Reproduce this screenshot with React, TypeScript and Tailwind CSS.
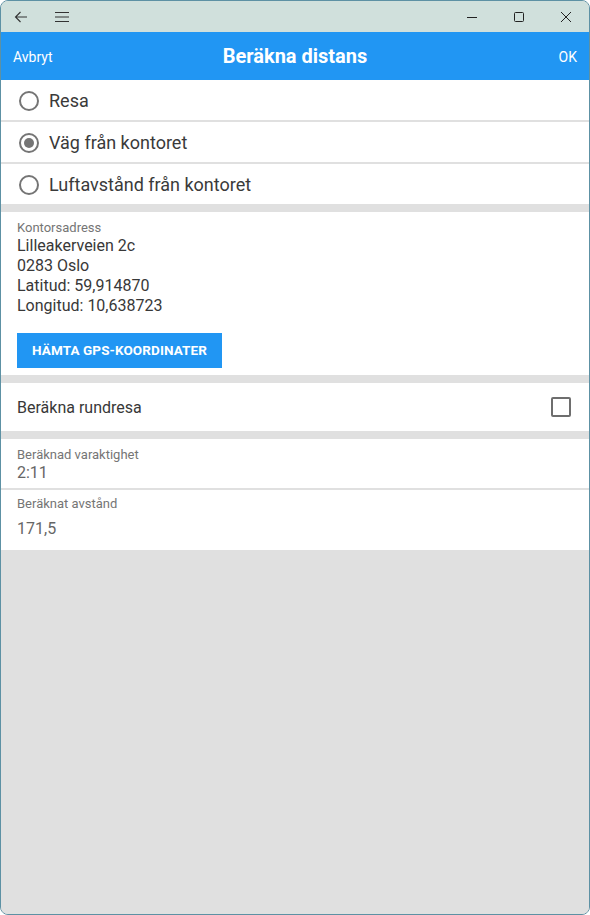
import React from 'react';

const Radio = ({ checked }: { checked?: boolean }) => (
    <svg width="22" height="22" viewBox="0 0 22 22" className="shrink-0">
        <circle cx="11" cy="11" r="9" fill="none" stroke="#757575" strokeWidth="2" />
        {checked && <circle cx="11" cy="11" r="5" fill="#757575" />}
    </svg>
);

const options = [
    { label: 'Resa', checked: false },
    { label: 'Väg från kontoret', checked: true },
    { label: 'Luftavstånd från kontoret', checked: false },
];

export default function App() {
    return (
        <div className="w-[590px] h-[915px] bg-white font-['Roboto',sans-serif]">
            <div className="w-full h-full flex flex-col border border-[#5d91a4] rounded-[8px] overflow-hidden bg-[#e0e0e0]">
                {/* title bar */}
                <div className="h-[31px] bg-[#d0e0dc] flex items-center shrink-0 text-[#222]">
                    <svg width="16" height="16" viewBox="0 0 16 16" className="ml-[12px]">
                        <path d="M14 8H2.5M7.5 3L2.5 8l5 5" fill="none" stroke="#333" strokeWidth="1.1" />
                    </svg>
                    <svg width="16" height="12" viewBox="0 0 16 12" className="ml-[25px]">
                        <path d="M1 1.5h14M1 6h14M1 10.5h14" fill="none" stroke="#333" strokeWidth="1.1" />
                    </svg>
                    <div className="flex-1" />
                    <svg width="12" height="12" viewBox="0 0 12 12" className="mr-[35px]">
                        <path d="M1 6.5h10" stroke="#222" strokeWidth="1" />
                    </svg>
                    <svg width="12" height="12" viewBox="0 0 12 12" className="mr-[35px]">
                        <rect x="1.5" y="1.5" width="9" height="9" rx="1" fill="none" stroke="#222" strokeWidth="1" />
                    </svg>
                    <svg width="12" height="12" viewBox="0 0 12 12" className="mr-[17px]">
                        <path d="M1 1l10 10M11 1L1 11" stroke="#222" strokeWidth="1" />
                    </svg>
                </div>

                {/* header */}
                <div className="h-[48px] bg-[#2196f3] flex items-center justify-between px-[12px] pt-[2px] text-white shrink-0 relative">
                    <span className="text-[14px]">Avbryt</span>
                    <span className="absolute left-0 right-0 top-[12px] text-center text-[20px] leading-[24px] font-bold pointer-events-none">Beräkna distans</span>
                    <span className="text-[14px]">OK</span>
                </div>

                {/* radio list */}
                <div className="bg-white">
                    {options.map((o, i) => (
                        <div
                            key={o.label}
                            className={i < 2
                                ? 'h-[42px] flex items-center gap-[9px] pl-[17px] pt-[1px] text-[18px] text-[#3a3a3a] border-b-2 border-[#e0e0e0]'
                                : 'h-[40px] flex items-center gap-[9px] pl-[17px] pt-[1px] text-[18px] text-[#3a3a3a]'}
                        >
                            <Radio checked={o.checked} />
                            <span>{o.label}</span>
                        </div>
                    ))}
                </div>

                {/* address */}
                <div className="bg-white mt-[8px] px-[16px] pt-[8px] pb-[7px]">
                    <p className="text-[13px] leading-[16px] text-[#757575]">Kontorsadress</p>
                    <div className="text-[16px] leading-[20px] text-[#383838]">
                        <p>Lilleakerveien 2c</p>
                        <p>0283 Oslo</p>
                        <p>Latitud: 59,914870</p>
                        <p>Longitud: 10,638723</p>
                    </div>
                    <button className="mt-[17px] h-[35px] w-[205px] bg-[#2196f3] text-white text-[13.5px] font-bold uppercase tracking-[0.1px]">
                        Hämta GPS-koordinater
                    </button>
                </div>

                {/* round trip */}
                <div className="bg-white mt-[8px] h-[48px] flex items-center justify-between pl-[16px] pr-[18px] pt-[2px]">
                    <span className="text-[16px] text-[#383838]">Beräkna rundresa</span>
                    <div className="w-[20px] h-[20px] border-2 border-[#6e6e6e] rounded-[2px] -mt-[2px]" />
                </div>

                {/* results */}
                <div className="bg-white mt-[8px] px-[16px] pt-[8px] pb-[5px] border-b-2 border-[#e0e0e0]">
                    <p className="text-[13px] leading-[16px] text-[#757575]">Beräknad varaktighet</p>
                    <p className="text-[16px] leading-[20px] text-[#666]">2:11</p>
                </div>
                <div className="bg-white px-[16px] pt-[6px] pb-[11px]">
                    <p className="text-[13px] leading-[16px] text-[#757575]">Beräknat avstånd</p>
                    <p className="mt-[7px] text-[16px] leading-[20px] text-[#666]">171,5</p>
                </div>

                <div className="flex-1 bg-[#e0e0e0]" />
            </div>
        </div>
    );
}
